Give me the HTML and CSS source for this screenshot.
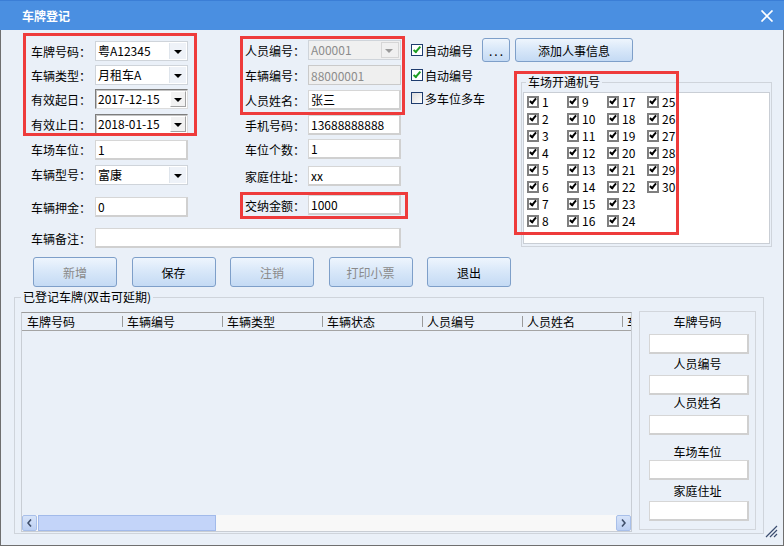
FILE: index.html
```html
<!DOCTYPE html>
<html lang="zh-CN">
<head>
    <meta charset="UTF-8">
    <meta name="viewport" content="width=device-width, initial-scale=1.0">
    <title>车牌登记</title>
    <link rel="stylesheet" href="styles.css">
</head>
<body>
    <div class="window">
        <div class="titlebar">
            <span class="title">车牌登记</span>
            <svg class="close" width="14" height="12" viewBox="0 0 14 12"><path d="M1.5 0.5L12.5 11.5M12.5 0.5L1.5 11.5" stroke="#fff" stroke-width="1.7" fill="none"/></svg>
        </div>
        <div class="body">
            <div class="top">
                <div class="form">
                    <div class="cols">
                        <div class="col col-left">
                            <div class="field"><label>车牌号码：</label><div class="combo">粤A12345<i class="drop"></i></div></div>
                            <div class="field"><label>车辆类型：</label><div class="combo">月租车A<i class="drop"></i></div></div>
                            <div class="field"><label>有效起日：</label><div class="combo date">2017-12-15<i class="drop"></i></div></div>
                            <div class="field"><label>有效止日：</label><div class="combo date">2018-01-15<i class="drop"></i></div></div>
                            <div class="field"><label>车场车位：</label><input class="text" type="text" value="1"></div>
                            <div class="field"><label>车辆型号：</label><div class="combo">富康<i class="drop"></i></div></div>
                            <div class="field"><label>车辆押金：</label><input class="text" type="text" value="0"></div>
                        </div>
                        <div class="col col-mid">
                            <div class="field"><label>人员编号：</label><div class="combo disabled">A00001<i class="drop"></i></div></div>
                            <div class="field"><label>车辆编号：</label><input class="text" type="text" value="88000001" disabled></div>
                            <div class="field"><label>人员姓名：</label><input class="text" type="text" value="张三"></div>
                            <div class="field"><label>手机号码：</label><input class="text" type="text" value="13688888888"></div>
                            <div class="field"><label>车位个数：</label><input class="text" type="text" value="1"></div>
                            <div class="field"><label>家庭住址：</label><input class="text" type="text" value="xx"></div>
                            <div class="field"><label>交纳金额：</label><input class="text" type="text" value="1000"></div>
                        </div>
                    </div>
                    <div class="field remark"><label>车辆备注：</label><input class="text wide" type="text" value=""></div>
                </div>
                <div class="side">
                    <div class="checks">
                        <div class="chk"><span class="box on"></span>自动编号</div>
                        <div class="chk"><span class="box on"></span>自动编号</div>
                        <div class="chk"><span class="box"></span>多车位多车</div>
                    </div>
                    <div class="side-right">
                        <div class="side-btns">
                            <button class="btn dots">...</button>
                            <button class="btn add">添加人事信息</button>
                        </div>
                        <fieldset class="group ports">
                            <legend>车场开通机号</legend>
                            <div class="port-list">
                                <div class="port"><span class="ck"></span>1</div>
                                <div class="port"><span class="ck"></span>2</div>
                                <div class="port"><span class="ck"></span>3</div>
                                <div class="port"><span class="ck"></span>4</div>
                                <div class="port"><span class="ck"></span>5</div>
                                <div class="port"><span class="ck"></span>6</div>
                                <div class="port"><span class="ck"></span>7</div>
                                <div class="port"><span class="ck"></span>8</div>
                                <div class="port"><span class="ck"></span>9</div>
                                <div class="port"><span class="ck"></span>10</div>
                                <div class="port"><span class="ck"></span>11</div>
                                <div class="port"><span class="ck"></span>12</div>
                                <div class="port"><span class="ck"></span>13</div>
                                <div class="port"><span class="ck"></span>14</div>
                                <div class="port"><span class="ck"></span>15</div>
                                <div class="port"><span class="ck"></span>16</div>
                                <div class="port"><span class="ck"></span>17</div>
                                <div class="port"><span class="ck"></span>18</div>
                                <div class="port"><span class="ck"></span>19</div>
                                <div class="port"><span class="ck"></span>20</div>
                                <div class="port"><span class="ck"></span>21</div>
                                <div class="port"><span class="ck"></span>22</div>
                                <div class="port"><span class="ck"></span>23</div>
                                <div class="port"><span class="ck"></span>24</div>
                                <div class="port"><span class="ck"></span>25</div>
                                <div class="port"><span class="ck"></span>26</div>
                                <div class="port"><span class="ck"></span>27</div>
                                <div class="port"><span class="ck"></span>28</div>
                                <div class="port"><span class="ck"></span>29</div>
                                <div class="port"><span class="ck"></span>30</div>
                            </div>
                        </fieldset>
                    </div>
                </div>
            </div>

            <div class="actions">
                <button class="btn off">新增</button>
                <button class="btn">保存</button>
                <button class="btn off">注销</button>
                <button class="btn off">打印小票</button>
                <button class="btn">退出</button>
            </div>

            <fieldset class="group records">
                <legend>已登记车牌(双击可延期)</legend>
                <div class="rec-inner">
                    <div class="list">
                        <div class="thead">
                            <div class="th">车牌号码</div>
                            <div class="th">车辆编号</div>
                            <div class="th">车辆类型</div>
                            <div class="th">车辆状态</div>
                            <div class="th">人员编号</div>
                            <div class="th">人员姓名</div>
                            <div class="th">车场车位</div>
                        </div>
                        <div class="tbody"></div>
                        <div class="hscroll">
                            <span class="arrow"><svg width="5" height="8" viewBox="0 0 5 8"><path d="M4 0.5L1 4L4 7.5" stroke="#3f4f6b" stroke-width="1.6" fill="none"/></svg></span>
                            <span class="thumb"></span>
                            <span class="track"></span>
                            <span class="arrow"><svg width="5" height="8" viewBox="0 0 5 8"><path d="M1 0.5L4 4L1 7.5" stroke="#3f4f6b" stroke-width="1.6" fill="none"/></svg></span>
                        </div>
                    </div>
                    <div class="finder">
                        <span class="f-label">车牌号码</span>
                        <input class="text f-input" type="text">
                        <span class="f-label">人员编号</span>
                        <input class="text f-input" type="text">
                        <span class="f-label">人员姓名</span>
                        <input class="text f-input" type="text">
                        <span class="f-label">车场车位</span>
                        <input class="text f-input" type="text">
                        <span class="f-label">家庭住址</span>
                        <input class="text f-input" type="text">
                    </div>
                </div>
            </fieldset>
        </div>

        <!-- 标注框 -->
        <div class="mark m1"></div>
        <div class="mark m2"></div>
        <div class="mark m3"></div>
        <div class="mark m4"></div>

        <svg class="grip" width="13" height="13" viewBox="0 0 13 13"><path d="M12 1L1 12M12 5L5 12M12 9L9 12" stroke="#3b4d70" stroke-width="1.2" fill="none"/></svg>
    </div>
</body>
</html>
```

FILE: styles.css
```css
body {
    margin: 0;
    font-family: "Noto Sans CJK SC", sans-serif;
    font-size: 12px;
    color: #000;
}
.window {
    position: relative;
    width: 784px;
    height: 546px;
}
.titlebar {
    height: 30px;
    box-sizing: border-box;
    background: #4a8fe1;
    border-top: 1px solid #3b7ed6;
    display: flex;
    align-items: center;
    justify-content: space-between;
    padding: 0 10px 0 22px;
}
.title {
    color: #fff;
    font-weight: bold;
}
.body {
    height: 516px;
    box-sizing: border-box;
    background: #eaf0f8;
    border: 1px solid #6f6f6f;
    border-top: none;
}
.top {
    display: flex;
    align-items: flex-start;
}
.form {
    width: 370px;
    margin-left: 30px;
}
.cols {
    display: flex;
    align-items: flex-start;
}
.col {
    display: grid;
}
.col-left {
    width: 158px;
    margin-top: 9px;
    grid-template-rows: 24px 24px 24px 26px 25px 25px 40px;
}
.col-mid {
    width: 156px;
    margin-top: 8px;
    margin-left: 56px;
    grid-template-rows: 24px 26px 24px 26px 22px 32px 26px;
}
.field {
    display: flex;
    align-items: center;
}
.field label {
    width: 64px;
    flex-shrink: 0;
    white-space: nowrap;
}
.col-mid .field label {
    width: 63px;
}
.remark {
    height: 22px;
}

/* 输入控件 */
.combo {
    position: relative;
    width: 93px;
    height: 20px;
    box-sizing: border-box;
    background: #fff;
    border: 1px solid #cfd4da;
    padding-left: 2px;
    line-height: 18px;
    white-space: nowrap;
}
.drop {
    position: absolute;
    right: 1px;
    top: 1px;
    bottom: 1px;
    width: 16px;
    background: #eef2f8;
    border-left: 1px solid #dfe5ec;
}
.drop::after {
    content: "";
    position: absolute;
    left: 4px;
    top: 7px;
    border-left: 4px solid transparent;
    border-right: 4px solid transparent;
    border-top: 4px solid #000;
}
.combo.disabled {
    background: #f0f0f0;
    color: #8c8c8c;
}
.combo.disabled .drop {
    background: #f0f0f0;
    border: 1px solid #d6d6d6;
}
.combo.disabled .drop::after {
    left: 3px;
    top: 6px;
    border-top-color: #9a9a9a;
}
.combo.date {
    border-color: #7d7d7d #dcdcdc #dcdcdc #7d7d7d;
    box-shadow: inset 1px 1px 0 #c4c4c4;
}
.combo.date .drop {
    right: 1px;
    top: 1px;
    bottom: 1px;
    width: 16px;
    background: #f2f2f2;
    border: 1px solid;
    border-color: #fff #a3a3a3 #a3a3a3 #fff;
    box-sizing: border-box;
}
.combo.date .drop::after {
    left: 3px;
    top: 6px;
}
.text {
    width: 93px;
    height: 20px;
    box-sizing: border-box;
    margin: 0;
    padding: 0 2px;
    font: inherit;
    color: #000;
    background: #fff;
    border: 1px solid #d6d6d6;
    border-right: 2px solid #d0d0d0;
    border-bottom: 2px solid #d0d0d0;
    outline: none;
}
.text:disabled {
    background: #efefef;
    color: #8c8c8c;
    border: 1px solid #cacaca;
}
.text.wide {
    width: 306px;
}

/* 右侧 */
.side {
    display: flex;
    margin-left: 10px;
    margin-top: 8px;
}
.checks {
    width: 71px;
    display: grid;
    grid-template-rows: 24px 26px 20px;
}
.chk {
    display: flex;
    align-items: center;
    gap: 2px;
    white-space: nowrap;
}
.box {
    position: relative;
    width: 12px;
    height: 12px;
    box-sizing: border-box;
    border: 1px solid #1e3c6e;
    background: linear-gradient(135deg, #dcdcdc, #fff);
}
.box.on {
    background: #fff;
}
.box.on::after {
    content: "";
    position: absolute;
    left: 3px;
    top: 0;
    width: 2px;
    height: 6px;
    border: solid #1e9e22;
    border-width: 0 2px 2px 0;
    transform: rotate(40deg);
}
.side-btns {
    display: flex;
    gap: 5px;
}
.btn {
    height: 30px;
    padding: 0;
    font: inherit;
    color: #000;
    border: 1px solid #7e9fc9;
    border-radius: 3px;
    background: linear-gradient(#eef5fd, #d9e8f9 45%, #c4daf4);
}
.btn.off {
    color: #8a8a8a;
}
.side-btns .btn {
    height: 24px;
}
.dots {
    width: 28px;
    letter-spacing: 2px;
    padding-left: 2px;
}
.add {
    width: 118px;
}

fieldset.group {
    min-width: 0;
    border: 1px solid #cfd4db;
}
fieldset.group legend {
    padding: 0 2px;
    line-height: 14px;
}
fieldset.ports {
    width: 251px;
    box-sizing: border-box;
    margin: 13px 0 0 39px;
    padding: 3px 1px 2px;
}
fieldset.ports legend {
    margin-left: 3px;
}
.port-list {
    height: 152px;
    box-sizing: border-box;
    background: #fff;
    border: 1px solid #c9ced5;
    padding: 0 0 0 3px;
    display: grid;
    grid-auto-flow: column;
    grid-template-rows: repeat(8, 17px);
    grid-template-columns: repeat(4, 40px);
    align-content: start;
}
.port {
    display: flex;
    align-items: center;
    gap: 3px;
}
.ck {
    position: relative;
    width: 12px;
    height: 12px;
    box-sizing: border-box;
    border: 2px solid #7f7f7f;
    background: #fff;
}
.ck::after {
    content: "";
    position: absolute;
    left: 2px;
    top: -1px;
    width: 2px;
    height: 5px;
    border: solid #000;
    border-width: 0 2px 2px 0;
    transform: rotate(40deg);
}

/* 按钮行 */
.actions {
    display: flex;
    gap: 14.5px;
    margin: 8px 0 0 32px;
}
.actions .btn {
    width: 84px;
}

/* 已登记车牌 */
fieldset.records {
    width: 750px;
    box-sizing: border-box;
    margin: 3px 0 0 13px;
    padding: 7px 6px 1px;
}
.rec-inner {
    display: flex;
    align-items: flex-start;
    gap: 7px;
}
.list {
    width: 611px;
    height: 220px;
    margin-top: 1px;
    box-sizing: border-box;
    border: 1px solid #c8cdd4;
    border-top-color: #9d9d9d;
    display: flex;
    flex-direction: column;
    overflow: hidden;
}
.thead {
    display: flex;
    height: 17px;
    flex-shrink: 0;
    border-bottom: 1px solid #a4a4a4;
}
.th {
    position: relative;
    width: 100px;
    flex-shrink: 0;
    box-sizing: border-box;
    padding-left: 5px;
    line-height: 17px;
    white-space: nowrap;
}
.th + .th::before {
    content: "";
    position: absolute;
    left: 0;
    top: 3px;
    height: 11px;
    border-left: 1px solid #9a9a9a;
}
.tbody {
    flex: 1;
}
.hscroll {
    height: 16px;
    flex-shrink: 0;
    display: flex;
    background: #f8f8f8;
}
.arrow {
    width: 15px;
    box-sizing: border-box;
    border: 1px solid #a8bfe9;
    border-radius: 2px;
    background: linear-gradient(#d6e3f9, #bdd0f3);
    display: flex;
    align-items: center;
    justify-content: center;
}
.thumb {
    width: 178px;
    margin-left: 1px;
    box-sizing: border-box;
    border: 1px solid #a2baea;
    background: #c3d4f9;
}
.track {
    flex: 1;
}
.finder {
    width: 117px;
    height: 219px;
    box-sizing: border-box;
    border: 1px solid #d2d6dc;
    display: grid;
    grid-template-rows: 20px 24px 16px 26px 10px 34px 19px 18px 23px 18px;
    align-items: center;
}
.f-label {
    justify-self: center;
    line-height: 16px;
    white-space: nowrap;
}
.f-input {
    width: 100px;
    margin-left: 9px;
}

/* 标注 */
.mark {
    position: absolute;
    box-sizing: border-box;
    border: 3px solid #ee3b3b;
}
.m1 { left: 23px; top: 33px; width: 174px; height: 103px; }
.m2 { left: 240px; top: 36px; width: 165px; height: 79px; }
.m3 { left: 240px; top: 192px; width: 168px; height: 27px; }
.m4 { left: 514px; top: 71px; width: 165px; height: 164px; }

.grip {
    position: absolute;
    right: 6px;
    bottom: 8px;
}
```
